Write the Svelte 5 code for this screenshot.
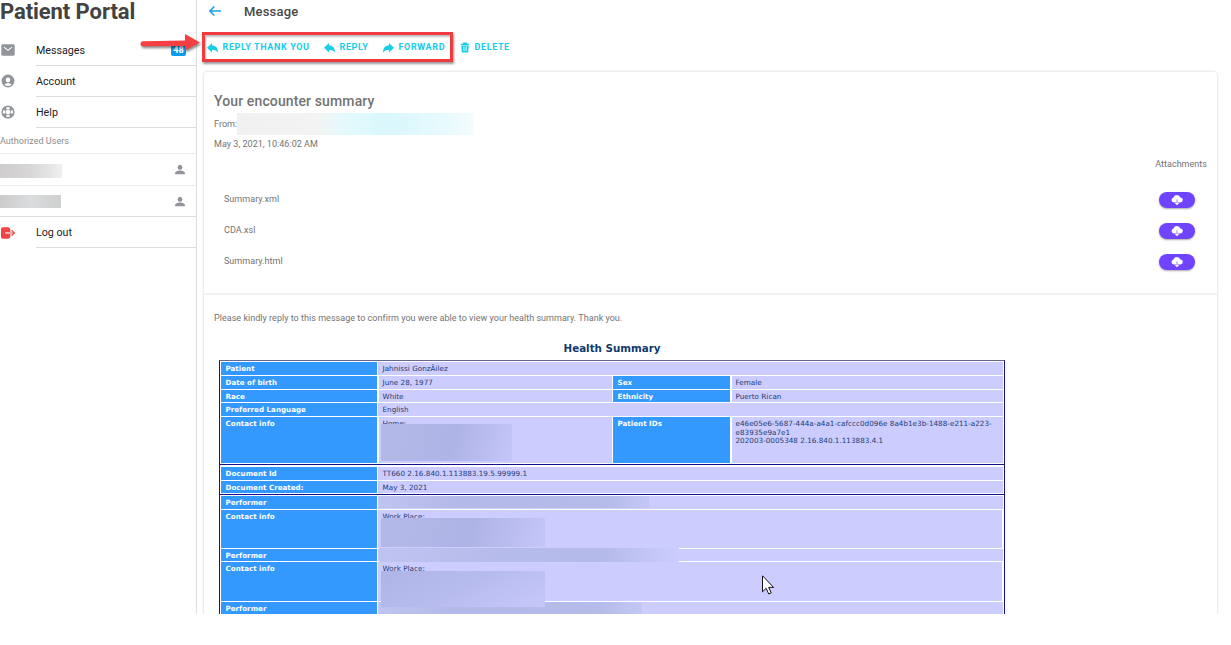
<script>
  const nav = [
    {label: 'Messages', icon: 'mail', badge: 48},
    {label: 'Account', icon: 'contact'},
    {label: 'Help', icon: 'help'}
  ];

  const actions = [
    {label: 'Reply thank you', icon: 'reply', width: 117},
    {label: 'Reply', icon: 'reply', width: 59},
    {label: 'Forward', icon: 'forward', width: 77},
    {label: 'Delete', icon: 'trash', width: 60}
  ];

  const files = ['Summary.xml', 'CDA.xsl', 'Summary.html'];

  const sections = [
    {
      name: 'patient',
      rows: [
        {height: 14, cells: ['Patient', 'Jahnissi GonzÃilez']},
        {height: 14, cells: ['Date of birth', 'June 28, 1977', 'Sex', 'Female']},
        {height: 13, cells: ['Race', 'White', 'Ethnicity', 'Puerto Rican']},
        {height: 14, cells: ['Preferred Language', 'English']},
        {
          height: 47,
          cells: ['Contact info', 'Home:', 'Patient IDs', 'e46e05e6-5687-444a-a4a1-cafccc0d096e 8a4b1e3b-1488-e211-a223-\ne83935e9a7e1\n202003-0005348 2.16.840.1.113883.4.1'],
          mask: 'home'
        }
      ]
    },
    {
      name: 'document',
      rows: [
        {height: 14, cells: ['Document Id', 'TT660 2.16.840.1.113883.19.5.99999.1']},
        {height: 13, cells: ['Document Created:', 'May 3, 2021']}
      ]
    },
    {
      name: 'performers',
      rows: [
        {height: 14, cells: ['Performer', ''], mask: 'name'},
        {height: 39, cells: ['Contact info', 'Work Place:'], mask: 'work', inset: true},
        {height: 13, cells: ['Performer', ''], mask: 'name second'},
        {height: 40, cells: ['Contact info', 'Work Place:'], mask: 'work second', inset: true},
        {height: 14, cells: ['Performer', ''], mask: 'name third'}
      ]
    }
  ];
</script>

{#snippet icon(name)}
  <svg class="icon {name}" viewBox="0 0 24 24">
    {#if name === 'mail'}
      <path fill="currentColor" d="M3 2h18q2.500 0 2.500 2.500v15Q23.500 22 21 22H3Q.5 22 .5 19.500v-15Q.5 2 3 2z" />
      <path fill="none" stroke="#fff" stroke-width="1.8" d="M5 7l7 5.500L19 7" />
    {:else if name === 'contact'}
      <path fill="currentColor" fill-rule="evenodd" d="M12 1a11 11 0 1 0 0 22 11 11 0 0 0 0-22zm0 5c2.400 0 4 1.800 3.800 4.200-.2 2.300-1.800 4.200-3.800 4.200s-3.600-1.900-3.800-4.200C8 7.800 9.600 6 12 6zM6 18.300c1.300-1.700 3.700-2.500 6-2.500s4.700.800 6 2.500a8.600 8.600 0 0 1-12 0z" />
    {:else if name === 'help'}
      <circle cx="12" cy="12" r="7.500" fill="none" stroke="currentColor" stroke-width="7.500" />
      <path fill="#fff" d="M8.500 4.200a8.500 8.500 0 0 1 7 0L14.200 7.500h-4.400zM8.500 19.800a8.500 8.500 0 0 0 7 0L14.200 16.500h-4.400zM4.200 8.500a8.500 8.500 0 0 0 0 7L7.500 14.200v-4.400zM19.800 8.500a8.500 8.500 0 0 1 0 7L16.500 14.200v-4.400z" />
    {:else if name === 'person'}
      <ellipse cx="12" cy="6.500" rx="5.500" ry="6" fill="currentColor" />
      <path fill="currentColor" d="M0 22.500c0-5.500 6-8 12-8s12 2.500 12 8v1H0z" />
    {:else if name === 'logout'}
      <path fill="currentColor" d="M3 2h9q4 0 4 4v12q0 4-4 4H3q-3 0-3-3V5q0-3 3-3z" />
      <path fill="none" stroke="#fff" stroke-width="2" d="M7 12h9" />
      <path fill="none" stroke="currentColor" stroke-width="2" d="M16 12h7M18 7l5 5-5 5" />
    {:else if name === 'reply'}
      <path fill="currentColor" d="M0 12.500L11 2v5.500C19 7.500 24 13 24 23c-3.500-4.500-7-5.500-13-5.500V23z" />
    {:else if name === 'forward'}
      <path fill="currentColor" d="M24 12.500L13 2v5.500C5 7.500 0 13 0 23c3.500-4.500 7-5.500 13-5.500V23z" />
    {:else if name === 'trash'}
      <path fill="none" stroke="currentColor" stroke-width="2.500" d="M2 4.500h20M8 4V1.500h8V4" />
      <path fill="currentColor" d="M3 7h18l-1.500 17h-15z" />
      <path stroke="#fff" stroke-width="1.400" d="M8.500 9.500l.5 11M12 9.500v11M15.500 9.500l-.5 11" />
    {:else if name === 'cloud'}
      <path fill="currentColor" d="M5.500 17A5.200 5.200 0 0 1 5 6.800 7.200 7.200 0 0 1 18.700 7 5 5 0 0 1 18.500 17h-5.800V11h-1.400v6z" />
      <path fill="currentColor" d="M7.500 18h3.800v-2h1.400v2h3.800L12 22.500z" />
    {/if}
  </svg>
{/snippet}

<div class="portal">
  <aside>
    <h1>Patient Portal</h1>
    <nav>
      {#each nav as item}
        <a href="#{item.icon}">
          {@render icon(item.icon)}
          <span>{item.label}{#if item.badge}<b>{item.badge}</b>{/if}</span>
        </a>
      {/each}
    </nav>
    <h2>Authorized Users</h2>
    <div class="user"><i></i>{@render icon('person')}</div>
    <div class="user other"><i></i>{@render icon('person')}</div>
    <a href="#logout" class="exit">
      {@render icon('logout')}
      <span>Log out</span>
    </a>
  </aside>

  <main>
    <header>
      <svg class="back" viewBox="0 0 12 10"><path d="M12 5H1M5.300.5L.8 5l4.500 4.500" /></svg>
      <h2>Message</h2>
    </header>

    <div class="actions">
      {#each actions as action}
        <button style="width: {action.width}px">{@render icon(action.icon)}{action.label}</button>
      {/each}
    </div>

    <div class="card">
      <section class="intro">
        <h3>Your encounter summary</h3>
        <p class="from">From:<i></i></p>
        <p class="date">May 3, 2021, 10:46:02 AM</p>
        <p class="attachments">Attachments</p>
        {#each files as file}
          <div class="file">
            <span>{file}</span>
            <button>{@render icon('cloud')}</button>
          </div>
        {/each}
      </section>

      <section class="body">
        <p>Please kindly reply to this message to confirm you were able to view your health summary. Thank you.</p>
        <h4>Health Summary</h4>
        <div class="summary">
          {#each sections as section}
            <div class="group {section.name}">
              {#each section.rows as row}
                <div class="row" class:inset={row.inset} class:split={row.cells.length > 2} style="height: {row.height}px">
                  {#each row.cells as cell, i}
                    <div class={i % 2 ? 'value' : 'label'}><span>{cell}</span></div>
                  {/each}
                  {#if row.mask}<i class="mask {row.mask}"></i>{/if}
                </div>
              {/each}
            </div>
          {/each}
        </div>
      </section>
    </div>
  </main>

  <div class="highlight"></div>
  <svg class="arrow" viewBox="0 0 64 24">
    <path d="M3 7.200L45 6.500V0l15 8.500L45 16.500V12L3 12.200a2.500 2.500 0 0 1 0-5z" />
  </svg>
  <svg class="cursor" viewBox="0 0 12 20">
    <path d="M.5.800v16l3.700-3.500L6.700 19l2.500-1.100-2.500-5.500h4.900z" />
  </svg>
</div>

<style>
  :global(body) {
    background: #fff;
  }

  .portal {
    position: relative;
    display: flex;
    height: 614px;
    overflow: hidden;
    font-family: Roboto, sans-serif;
    color: #737373;
  }

  h1, h2, h3, h4, p {
    margin: 0;
    font-weight: 400;
  }

  .icon {
    display: block;
    flex: none;
  }

  aside {
    box-sizing: border-box;
    width: 197px;
    border-right: 1px solid #dedede;
  }
  aside h1 {
    height: 35px;
    font-size: 22px;
    line-height: 24px;
    font-weight: 700;
    letter-spacing: -0.08px;
    color: #424242;
    white-space: nowrap;
  }
  aside a {
    display: flex;
    align-items: center;
    height: 31px;
    color: #92949c;
    text-decoration: none;
  }
  aside a .icon {
    width: 14px;
    height: 14px;
    margin: 0 21px 2px 1px;
  }
  aside a .mail {
    width: 14px;
  }
  aside a span {
    display: flex;
    flex: 1;
    align-items: center;
    justify-content: space-between;
    height: 30px;
    border-bottom: 1px solid #dedede;
    color: #222;
    font-size: 10.7px;
  }
  aside b {
    width: 15px;
    height: 12px;
    margin-right: 10px;
    border-radius: 2px;
    background: #0d9bf0;
    color: #fff;
    font-size: 9px;
    line-height: 12px;
    text-align: center;
  }
  aside h2 {
    height: 25px;
    border-bottom: 1px solid #ebebeb;
    font-size: 9px;
    line-height: 27px;
    letter-spacing: 0.03px;
    color: #8c8c8c;
  }
  .user {
    display: flex;
    align-items: center;
    justify-content: space-between;
    height: 31px;
    padding-right: 11px;
    border-bottom: 1px solid #ebebeb;
    color: #92949c;
  }
  .user i {
    width: 62px;
    height: 14px;
    margin-top: 3px;
    background: linear-gradient(90deg, #cfcccd, #d8d6d6 50%, #efefef);
  }
  .user .icon {
    width: 10px;
    height: 11px;
  }
  .user.other {
    height: 30px;
    border-bottom-color: #dedede;
  }
  .other i {
    width: 61px;
    height: 13px;
    margin-top: 1px;
    background: linear-gradient(90deg, #cbcbcb, #dadcde 50%, #cdd0ce);
  }
  aside .exit {
    color: #ee4444;
  }
  aside .exit .icon {
    margin-bottom: 0;
  }

  main {
    flex: 1;
    padding-left: 7px;
  }
  header {
    display: flex;
    align-items: center;
    height: 22px;
    padding-left: 5px;
  }
  .back {
    width: 12px;
    height: 10px;
    fill: none;
    stroke: #1a9df4;
    stroke-width: 1.5;
  }
  header h2 {
    margin-left: 23px;
    font-size: 13px;
    font-weight: 500;
    letter-spacing: 0.2px;
    color: #484848;
  }
  .actions {
    display: flex;
    height: 50px;
    padding-left: 3px;
  }
  .actions button {
    display: flex;
    align-items: center;
    gap: 4.5px;
    height: 50px;
    padding: 0;
    border: 0;
    background: none;
    font: 700 9px Roboto, sans-serif;
    letter-spacing: 0.62px;
    text-transform: uppercase;
    white-space: nowrap;
    color: #17cde8;
  }
  .actions .icon {
    width: 11px;
    height: 11px;
  }
  .actions .trash {
    width: 10px;
    height: 13px;
  }

  .card {
    width: 1013px;
    height: 600px;
    border-radius: 3px;
    box-shadow: 0 0 3px rgba(0, 0, 0, 0.2);
    font-size: 9px;
    letter-spacing: 0.03px;
  }
  .intro {
    box-sizing: border-box;
    height: 223px;
    padding: 20px 10px 0;
    border-bottom: 2px solid #f2f2f2;
  }
  .intro h3 {
    height: 21px;
    font-size: 14px;
    line-height: 19px;
    font-weight: 500;
    letter-spacing: 0.12px;
  }
  .from {
    display: flex;
    height: 22px;
    line-height: 22px;
  }
  .from i {
    width: 237px;
    height: 22px;
    background: linear-gradient(90deg, #f0f0f0, #f3f3f3 34%, #e4f9fc 45%, #d9f7fc 65%, #e8fafd 88%, #f5fcfd);
  }
  .date {
    line-height: 19px;
  }
  .attachments {
    height: 31px;
    line-height: 21px;
    text-align: right;
  }
  .file {
    display: flex;
    justify-content: space-between;
    height: 31px;
    padding: 7px 12px 0 10px;
    box-sizing: border-box;
  }
  .file span {
    line-height: 15px;
    height: 15px;
  }
  .file button {
    display: flex;
    align-items: center;
    justify-content: center;
    width: 36px;
    height: 16px;
    padding: 0;
    border: 0;
    border-radius: 8px;
    background: #7044ff;
    box-shadow: 0 1px 2px rgba(0, 0, 0, 0.35);
    color: #fff;
  }
  .cloud {
    width: 12px;
    height: 12px;
  }

  .body p {
    padding: 14px 10px 0;
    line-height: 18px;
  }
  .body h4 {
    width: 816px;
    height: 33px;
    font: 700 10.3px/43px Verdana, "DejaVu Sans", sans-serif;
    letter-spacing: 0;
    text-align: center;
    color: #103a6e;
  }
  .summary {
    box-sizing: border-box;
    width: 786px;
    margin-left: 15px;
    border: 1px solid #12128f;
    border-top-color: #66668f;
    font: 7.2px/8.500px Verdana, "DejaVu Sans", sans-serif;
    color: #1b3c72;
  }
  .group {
    padding: 1px 1px 0;
    border-bottom: 1px solid #12128f;
  }
  .group.document {
    padding-top: 2px;
  }
  .row {
    position: relative;
    display: grid;
    grid-template-columns: 156px 1fr;
    column-gap: 1px;
    padding-bottom: 1px;
    box-sizing: border-box;
  }
  .row.split {
    grid-template-columns: 156px 233px 117px 1fr;
    column-gap: 1.500px;
  }
  .row.inset {
    padding-right: 1px;
  }
  .label, .value {
    min-height: 0;
    padding: 3px 0 0 4.5px;
    white-space: pre;
  }
  .label {
    background: #3399ff;
    color: #fff;
    font-size: 7.1px;
    font-weight: 700;
  }
  .value {
    background: #ccccff;
  }
  .split .value {
    padding-left: 4px;
  }
  .mask {
    position: absolute;
    top: 7px;
    left: 160px;
    width: 131px;
    height: 37px;
    background: linear-gradient(105deg, #b3b9e7, #aeb4e6 55%, #c5c5f8);
  }
  .mask.name {
    top: 0;
    left: 158px;
    width: 270px;
    height: 12px;
    background: linear-gradient(90deg, #bfc3f0, #b3b9e8 30%, #b5bcea 85%, #c4c7f5);
  }
  .mask.work {
    top: 8px;
    width: 164px;
    height: 29px;
  }
  .mask.name.second {
    top: -1px;
    width: 300px;
    height: 14px;
    background: linear-gradient(90deg, #bfc3f0, #b5bbeb 40%, #b4bbea 75%, #ccccff);
  }
  .mask.work.second {
    top: 9px;
    z-index: 1;
    height: 36px;
    background: linear-gradient(155deg, #afb4e6, #b7bcee 50%, #c7c7fa);
  }
  .mask.name.third {
    width: 263px;
  }

  .highlight {
    position: absolute;
    top: 32px;
    left: 202px;
    width: 245px;
    height: 24px;
    border: 3px solid #f03c41;
    box-shadow: 1px 2px 2px rgba(0, 0, 0, 0.4), inset 1px 2px 2px rgba(0, 0, 0, 0.25);
  }
  .arrow {
    position: absolute;
    top: 34px;
    left: 140px;
    width: 64px;
    height: 24px;
    fill: #f44043;
    filter: drop-shadow(1px 2px 1px rgba(0, 0, 0, 0.45));
  }
  .cursor {
    position: absolute;
    top: 575px;
    left: 762px;
    width: 12px;
    height: 20px;
    fill: #fff;
    stroke: #111;
    stroke-width: 1;
  }
</style>
